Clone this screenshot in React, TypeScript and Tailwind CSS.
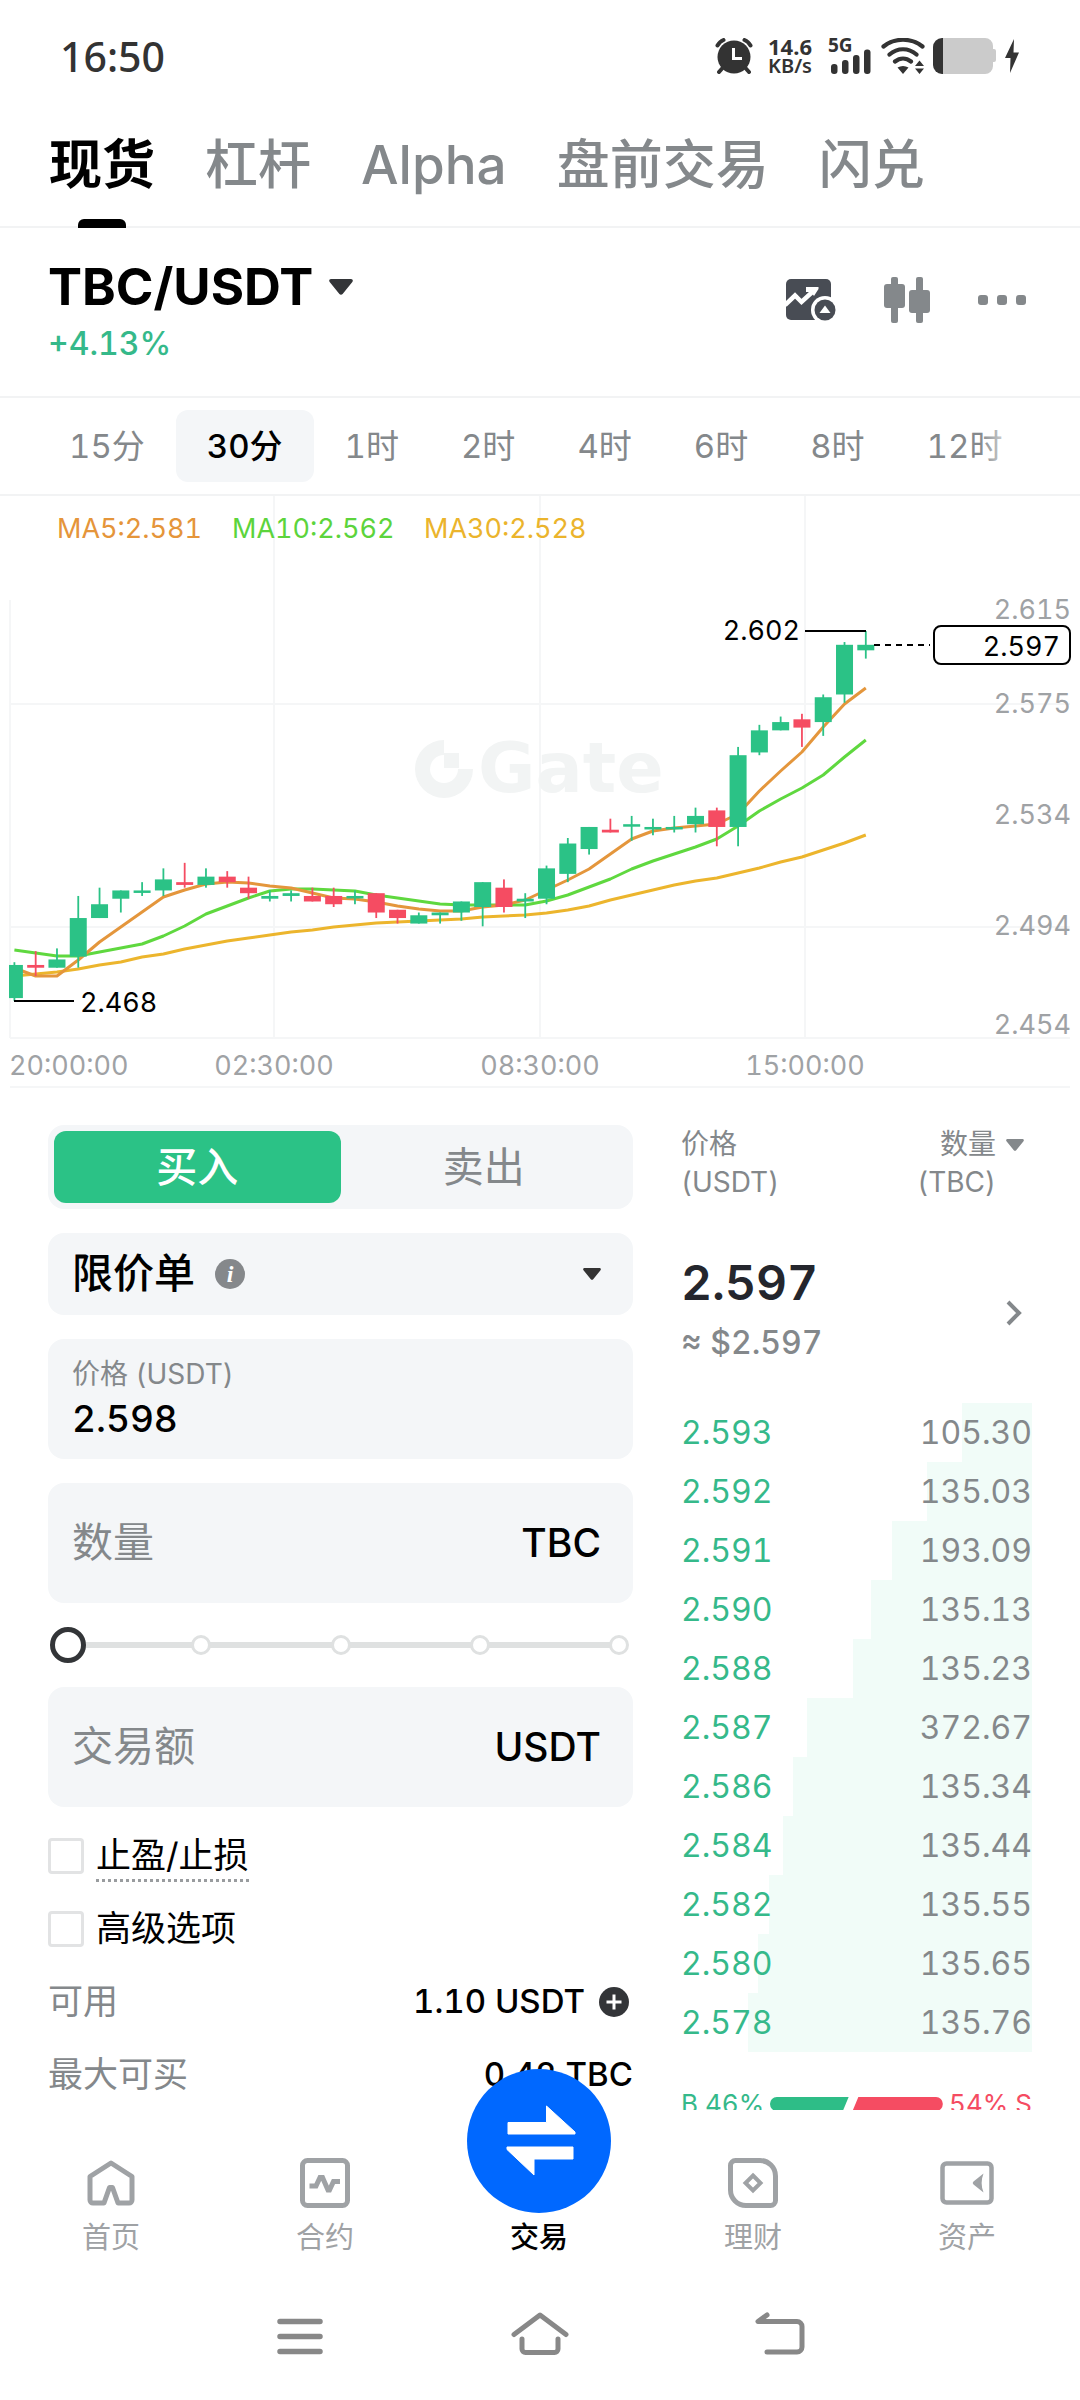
import { useState } from "react";

const tabs = ["现货", "杠杆", "Alpha", "盘前交易", "闪兑"];
const intervals = ["15分", "30分", "1时", "2时", "4时", "6时", "8时", "12时"];

// open, close, high, low (in 0.001 USDT)
const candles = [
  [2469, 2481, 2482, 2468],
  [2481, 2480, 2486, 2477],
  [2480, 2483, 2487, 2480],
  [2484, 2498, 2506, 2480],
  [2498, 2503, 2509, 2498],
  [2505, 2508, 2508, 2500],
  [2508, 2508, 2511, 2506],
  [2508, 2512, 2516, 2506],
  [2511, 2510, 2518, 2509],
  [2510, 2513, 2516, 2509],
  [2513, 2511, 2515, 2509],
  [2509, 2507, 2513, 2505],
  [2505, 2506, 2508, 2504],
  [2506, 2507, 2508, 2504],
  [2506, 2504, 2509, 2504],
  [2506, 2503, 2509, 2502],
  [2506, 2506, 2508, 2503],
  [2507, 2500, 2507, 2498],
  [2501, 2498, 2501, 2496],
  [2496, 2499, 2500, 2496],
  [2499, 2500, 2500, 2496],
  [2500, 2504, 2504, 2497],
  [2502, 2511, 2511, 2495],
  [2509, 2502, 2512, 2500],
  [2504, 2505, 2507, 2498],
  [2505, 2516, 2517, 2503],
  [2514, 2525, 2527, 2511],
  [2523, 2531, 2531, 2521],
  [2530, 2529, 2534, 2529],
  [2532, 2532, 2535, 2526],
  [2531, 2531, 2534, 2528],
  [2531, 2531, 2535, 2529],
  [2532, 2535, 2538, 2529],
  [2537, 2531, 2538, 2524],
  [2531, 2557, 2560, 2524],
  [2558, 2566, 2568, 2557],
  [2566, 2569, 2571, 2566],
  [2570, 2567, 2572, 2560],
  [2569, 2578, 2579, 2564],
  [2579, 2597, 2598, 2576],
  [2595, 2597, 2602, 2592],
];

const ma5 = [472, 480, 480, 464, 446, 431, 416, 401, 394, 388, 386, 387, 390, 392, 397, 402, 403, 406, 410, 413, 415, 415, 411, 409, 404, 394, 384, 373, 358, 343, 335, 332, 330, 328, 318, 295, 275, 256, 231, 208, 192];
const ma10 = [454, 457, 460, 460, 456, 452, 448, 440, 430, 418, 410, 402, 395, 393, 393, 394, 395, 399, 402, 405, 408, 409, 409, 409, 409, 405, 399, 391, 383, 373, 365, 358, 351, 343, 330, 315, 303, 292, 279, 261, 244];
const ma30 = [480, 478, 476, 473, 469, 466, 461, 458, 453, 449, 445, 442, 439, 436, 434, 431, 429, 427, 426, 425, 424, 423, 421, 420, 419, 417, 414, 410, 404, 399, 394, 389, 385, 382, 377, 372, 366, 361, 354, 347, 339];

const bids = [
  { price: "2.593", amount: "105.30", depth: 20 },
  { price: "2.592", amount: "135.03", depth: 30 },
  { price: "2.591", amount: "193.09", depth: 40 },
  { price: "2.590", amount: "135.13", depth: 46 },
  { price: "2.588", amount: "135.23", depth: 51 },
  { price: "2.587", amount: "372.67", depth: 64 },
  { price: "2.586", amount: "135.34", depth: 68 },
  { price: "2.584", amount: "135.44", depth: 71 },
  { price: "2.582", amount: "135.55", depth: 75 },
  { price: "2.580", amount: "135.65", depth: 78 },
  { price: "2.578", amount: "135.76", depth: 81 },
];

const candleX = (i: number) => 14.4 + i * 21.285;
const priceY = (p: number) => 135 + (2602 - p) * 2.76;
const toPoints = (line: number[]) => line.map((y, i) => `${candleX(i)},${y}`).join(" ");

function Caret({ className }: { className?: string }) {
  return (
    <svg viewBox="0 0 18 12" className={className} fill="currentColor" aria-hidden="true">
      <path d="M1.5 0h15c1.200 0 1.800 1.300 1 2.200l-7.300 9c-.6.800-1.800.800-2.400 0l-7.300-9C-.3 1.300.300 0 1.500 0z" />
    </svg>
  );
}

function StatusBar() {
  return (
    <div className="flex h-[104px] shrink-0 items-center justify-between pt-2 pl-15 pr-[61px] font-['Noto_Sans',sans-serif] text-[#333]">
      <span className="text-[41px] leading-none font-medium">16:50</span>
      <div className="flex items-center">
        <svg viewBox="0 0 38 36" className="h-9 w-[38px]">
          <circle cx="19" cy="19" r="16.500" fill="#333" />
          <path d="M2.500 7.500C4 4.800 6 3 8.500 2M35.500 7.500C34 4.800 32 3 29.500 2M8 29.500L4 34M30 29.500L34 34" stroke="#333" strokeWidth="4" fill="none" strokeLinecap="round" />
          <path d="M18.500 10v10.500H27" stroke="#fff" strokeWidth="3" fill="none" />
        </svg>
        <div className="ml-3.5 flex w-[46px] flex-col items-center text-[20px] leading-5 font-bold">
          <span className="text-[22px]">14.6</span>
          <span className="font-semibold">KB/s</span>
        </div>
        <svg viewBox="0 0 44 36" className="ml-4 h-9 w-11 overflow-visible" fill="#333">
          <text x="-1" y="14" fontSize="19" fontWeight="700">5G</text>
          <rect x="2" y="26" width="6.500" height="10" rx="3" />
          <rect x="13" y="22" width="6.500" height="14" rx="3" />
          <rect x="24" y="17" width="6.500" height="19" rx="3" />
          <rect x="35" y="11.500" width="6.500" height="24.500" rx="3" />
        </svg>
        <svg viewBox="0 0 44 36" className="ml-2 h-9 w-11" fill="none" stroke="#333" strokeWidth="4.200" strokeLinecap="round">
          <path d="M2.500 8.500C14 -.5 30 -.5 41.500 8.500M8.500 16.500C16.500 9.500 27.500 9.500 35.500 16.500M14 23.500C19 19.500 25 19.500 30 23.500" />
          <path d="M16.500 29.500C20 27.500 24 27.500 27.500 29.500L22 36zM34 28L38.500 22.500L43 28zM34 30.500L38.500 36L43 30.500z" fill="#333" stroke="none" />
        </svg>
        <svg viewBox="0 0 64 36" className="ml-2 h-9 w-16">
          <path d="M10 0H52a8 8 0 0 1 8 8V11h1a2 2 0 0 1 2 2V22a2 2 0 0 1-2 2h-1v4a8 8 0 0 1-8 8H10z" fill="#cbcbcb" />
          <path d="M10 0H9A9 9 0 0 0 0 9V27a9 9 0 0 0 9 9h1z" fill="#333" />
        </svg>
        <svg viewBox="0 0 14 34" className="ml-2 h-[34px] w-3.5" fill="#333">
          <path d="M9 0L0 19h5.500L5 34L14 13.500H8.500z" />
        </svg>
      </div>
    </div>
  );
}

function PriceChart() {
  return (
    <svg viewBox="0 0 1080 592" className="block h-auto w-full" fontFamily="Inter, sans-serif" fontSize="27">
      <g stroke="#f5f6f7" strokeWidth="2" fill="none">
        <path d="M10 104V542M274 0V542M540 0V542M805 0V542M10 208H1070M10 431H1070M10 542H1070M10 591H1070" />
      </g>

      <g fill="#f2f4f4">
        <path d="M444 244v15a14 14 0 1 0 14 14h15a29 29 0 1 1-29-29z" />
        <path d="M444 257h15v15h-15z" />
        <text x="478" y="296" fontFamily="DejaVu Sans, sans-serif" fontSize="70" fontWeight="700">Gate</text>
      </g>

      <text x="57" y="42" fill="#e5953a">MA5:2.581</text>
      <text x="232" y="42" fill="#5cd43c">MA10:2.562</text>
      <text x="424" y="42" fill="#ebb42c">MA30:2.528</text>

      <g fill="none" strokeWidth="3" strokeLinejoin="round">
        <polyline points={toPoints(ma30)} stroke="#ecb52d" />
        <polyline points={toPoints(ma10)} stroke="#5fd83f" />
        <polyline points={toPoints(ma5)} stroke="#e4963c" />
      </g>

      {candles.map(([open, close, high, low], i) => {
        const color = close >= open ? "#2bc286" : "#f54c62";
        const x = candleX(i);
        const top = priceY(Math.max(open, close));
        const height = Math.max(Math.abs(open - close) * 2.76, 2.5);
        // the first candle is clipped by the left edge of the plot
        const left = Math.max(x - 8.5, 9);
        return (
          <g key={i} fill={color}>
            <rect x={x - 0.9} y={priceY(high)} width="1.800" height={(high - low) * 2.76} />
            <rect x={left} y={top} width={x + 8.5 - left} height={height} />
          </g>
        );
      })}

      <g stroke="#000" strokeWidth="2" fill="none">
        <path d="M805 135H866M14 505H74" />
        <path d="M874 149H930" strokeDasharray="6 5" />
        <rect x="934" y="130" width="136" height="38" rx="7" fill="#fff" />
      </g>
      <g fill="#000">
        <text x="800" y="144" textAnchor="end">2.602</text>
        <text x="80" y="516">2.468</text>
        <text x="1060" y="160" textAnchor="end">2.597</text>
      </g>
      <g fill="#9fa2a5">
        <g textAnchor="end">
          <text x="1071" y="123">2.615</text>
          <text x="1071" y="217">2.575</text>
          <text x="1071" y="328">2.534</text>
          <text x="1071" y="439">2.494</text>
          <text x="1071" y="538">2.454</text>
        </g>
        <text x="9" y="579">20:00:00</text>
        <g textAnchor="middle">
          <text x="274" y="579">02:30:00</text>
          <text x="540" y="579">08:30:00</text>
          <text x="805" y="579">15:00:00</text>
        </g>
      </g>
    </svg>
  );
}

function OrderForm() {
  const [price, setPrice] = useState("2.598");
  const [percent, setPercent] = useState(0);

  return (
    <div className="min-w-0">
      <div className="flex flex-col gap-6">
        <div className="flex h-[84px] rounded-2xl bg-[#f4f6f8] p-1.5">
          <button className="flex-1 rounded-xl bg-[#2bc286] text-[41px] leading-none font-medium text-white">买入</button>
          <button className="flex-1 text-[41px] leading-none text-[#84888b]">卖出</button>
        </div>

        <div className="flex h-[82px] items-center rounded-2xl bg-[#f4f6f8] pl-6 pr-8">
          <select aria-label="订单类型" className="h-full appearance-none bg-transparent text-[41px] font-medium text-black outline-none">
            <option>限价单</option>
          </select>
          <button aria-label="说明" className="ml-5">
            <svg viewBox="0 0 30 30" className="size-[30px]">
              <circle cx="15" cy="15" r="15" fill="#85888b" />
              <text x="15" y="23" textAnchor="middle" fontFamily="Liberation Serif, serif" fontSize="24" fontStyle="italic" fontWeight="700" fill="#fff">i</text>
            </svg>
          </button>
          <Caret className="ml-auto h-3 w-[18px] text-[#333]" />
        </div>

        <div className="flex h-[120px] flex-col justify-center rounded-2xl bg-[#f4f6f8] px-6">
          <label htmlFor="price" className="text-[28px] leading-10 text-[#84888b]">价格 (USDT)</label>
          <input
            id="price"
            value={price}
            onChange={(e) => setPrice(e.target.value)}
            className="h-[50px] w-full bg-transparent text-[37px] font-medium text-black outline-none"
          />
        </div>

        <label className="flex h-[120px] items-center rounded-2xl bg-[#f4f6f8] pl-6 pr-8 text-[39px] font-medium text-black">
          <input aria-label="数量" placeholder="数量" className="w-0 min-w-0 flex-1 bg-transparent text-[41px] font-normal outline-none placeholder:text-[#84888b]" />
          TBC
        </label>

        <div className="relative flex h-9 items-center">
          <div className="absolute inset-x-4 h-1.5 bg-[#dfe1e1]" />
          <div className="absolute inset-x-1 flex justify-between">
            {[0, 25, 50, 75, 100].map((p) => (
              <span key={p} className="size-5 rounded-full border-3 border-[#dfe1e1] bg-white" />
            ))}
          </div>
          <input
            type="range"
            aria-label="仓位比例"
            value={percent}
            onChange={(e) => setPercent(Number(e.target.value))}
            className="relative mx-0.5 h-9 w-full min-w-0 appearance-none bg-transparent [&::-webkit-slider-thumb]:size-9 [&::-webkit-slider-thumb]:appearance-none [&::-webkit-slider-thumb]:rounded-full [&::-webkit-slider-thumb]:border-5 [&::-webkit-slider-thumb]:border-[#333538] [&::-webkit-slider-thumb]:bg-white"
          />
        </div>

        <label className="flex h-[120px] items-center rounded-2xl bg-[#f4f6f8] pl-6 pr-8 text-[39px] font-medium text-black">
          <input aria-label="交易额" placeholder="交易额" className="w-0 min-w-0 flex-1 bg-transparent text-[41px] font-normal outline-none placeholder:text-[#84888b]" />
          USDT
        </label>
      </div>

      <div className="mt-3 text-[35px] leading-none">
        <label className="flex h-[73px] items-center gap-3 text-black">
          <input type="checkbox" className="size-9 appearance-none rounded-sm border-3 border-[#e2e3e4] bg-white" />
          <span className="border-b-3 border-dotted border-[#999c9f] pt-2 pb-1.5">止盈/止损</span>
        </label>
        <label className="flex h-[73px] items-center gap-3 text-black">
          <input type="checkbox" className="size-9 appearance-none rounded-sm border-3 border-[#e2e3e4] bg-white" />
          <span>高级选项</span>
        </label>
        <div className="flex h-[73px] items-center justify-between">
          <span className="text-[#84888b]">可用</span>
          <span className="flex items-center gap-3.5 text-[33px] font-medium text-black">
            1.10 USDT
            <button aria-label="充值">
              <svg viewBox="0 0 30 30" className="mr-1 size-[30px]">
                <circle cx="15" cy="15" r="15" fill="#333538" />
                <path d="M15 7.500v15M7.500 15h15" stroke="#fff" strokeWidth="3" />
              </svg>
            </button>
          </span>
        </div>
        <div className="flex h-[73px] items-center justify-between">
          <span className="text-[#84888b]">最大可买</span>
          <span className="text-[33px] font-medium text-black">0.42 TBC</span>
        </div>
      </div>
    </div>
  );
}

function OrderBook() {
  return (
    <div className="min-w-0">
      <div className="flex justify-between text-[28px] leading-[38px] text-[#84888b]">
        <div>
          价格
          <br />
          (USDT)
        </div>
        <button className="flex items-start gap-2.5 pr-2 text-right">
          <span>
            数量
            <br />
            (TBC)
          </span>
          <Caret className="mt-3.5 h-3 w-[18px]" />
        </button>
      </div>

      <div className="mt-[52px] flex items-center justify-between">
        <div>
          <div className="text-[48px] leading-[60px] font-semibold text-[#24262d]">2.597</div>
          <div className="text-[32px] leading-[60px] font-medium text-[#84888b]">≈ $2.597</div>
        </div>
        <button aria-label="更多" className="pr-2.5">
          <svg viewBox="0 0 16 26" className="h-[26px] w-4" fill="none" stroke="#84888b" strokeWidth="4">
            <path d="M2 2l11 11L2 24" />
          </svg>
        </button>
      </div>

      <table className="mt-[30px] w-full border-collapse text-[32px] leading-none">
        <tbody>
          {bids.map((b) => (
            <tr
              key={b.price}
              className="h-[59px]"
              style={{ backgroundImage: `linear-gradient(to left, #f1fcf8 ${b.depth}%, transparent ${b.depth}%)` }}
            >
              <td className="p-0 text-[#35b98a]">{b.price}</td>
              <td className="p-0 text-right text-[#84888b]">{b.amount}</td>
            </tr>
          ))}
        </tbody>
      </table>

      <div className="mt-8 flex h-10 items-center gap-1.5 text-[26px] leading-none whitespace-nowrap">
        <span className="text-[#35b98a]">B 46%</span>
        <svg viewBox="0 0 178 14" preserveAspectRatio="none" className="h-3.5 min-w-0 flex-1">
          <path d="M7 0H81L75 14H7A7 7 0 0 1 7 0z" fill="#2ebd87" />
          <path d="M91 0H171A7 7 0 0 1 171 14H85z" fill="#f54c62" />
        </svg>
        <span className="text-[#f54c62]">54% S</span>
      </div>
    </div>
  );
}

function BottomNav() {
  const item = "flex flex-1 flex-col items-center text-[29px] leading-10 text-[#9fa2a5]";
  const icon = "mt-12 mb-2.5 h-[50px]";
  return (
    <nav className="flex h-[174px] pr-1.5 pl-1">
      <a href="#home" className={item}>
        <svg viewBox="0 0 48 50" className={`${icon} w-12`} fill="none" stroke="currentColor" strokeWidth="5" strokeLinejoin="round">
          <path d="M24 5L3 18.500V42a3 3 0 0 0 3 3H17L22.500 29.500h3L31 45H42a3 3 0 0 0 3-3V18.500z" />
        </svg>
        首页
      </a>
      <a href="#futures" className={item}>
        <svg viewBox="0 0 50 50" className={`${icon} w-[50px]`} fill="none" stroke="currentColor" strokeWidth="5">
          <rect x="2.500" y="2.500" width="45" height="45" rx="5" />
          <path d="M9.500 28H16L20 19.500H22.500L28 32H29.500L33.500 23.500H40" />
        </svg>
        合约
      </a>
      <a href="#trade" className="relative flex flex-1 flex-col items-center pt-27 text-[29px] leading-10 font-medium text-black">
        <svg viewBox="0 0 144 144" className="absolute -top-[41px] size-36">
          <circle cx="72" cy="72" r="72" fill="#0068ff" />
          <g fill="#fff" stroke="#fff" strokeWidth="1" strokeLinejoin="round">
            <path d="M41 53.500H79.500V37L108 63V65H41z" />
            <path d="M106 78H40V80.500L67 106V90H106z" />
          </g>
        </svg>
        交易
      </a>
      <a href="#earn" className={item}>
        <svg viewBox="0 0 50 50" className={`${icon} w-[50px]`} fill="none" stroke="currentColor" strokeWidth="5">
          <path d="M7.500 2.500H32A15.500 15.500 0 0 1 47.500 18V42.500a5 5 0 0 1-5 5H18A15.500 15.500 0 0 1 2.500 32V7.500a5 5 0 0 1 5-5z" />
          <path d="M25 17.500L32.500 25L25 32.500L17.500 25z" strokeWidth="4" />
        </svg>
        理财
      </a>
      <a href="#assets" className={item}>
        <svg viewBox="0 0 54 50" className={`${icon} w-[54px]`} fill="none" stroke="currentColor" strokeWidth="4.500">
          <rect x="2.500" y="5.500" width="49" height="39" rx="4" />
          <path d="M43.500 15.500L33.500 23.500a2 2 0 0 0 0 3L43.500 34.500C41 28 41 22 43.500 15.500z" fill="currentColor" stroke="none" />
        </svg>
        资产
      </a>
    </nav>
  );
}

export default function App() {
  const [tab, setTab] = useState("现货");
  const [interval, setIntervalName] = useState("30分");

  return (
    <div className="flex h-screen flex-col bg-white font-['Inter','Noto_Sans_CJK_SC',sans-serif] tabular-nums">
      <StatusBar />

      <div className="flex h-[124px] shrink-0 gap-[50px] border-b-2 border-[#f2f3f4] px-[49px] text-[53px] leading-[114px]">
        {tabs.map((t) => (
          <button
            key={t}
            onClick={() => setTab(t)}
            className={t === tab ? "relative font-bold whitespace-nowrap text-black" : "font-medium whitespace-nowrap text-[#84888b]"}
          >
            {t}
            {t === tab && <span className="absolute -bottom-0.5 left-1/2 h-[9px] w-12 -translate-x-1/2 rounded-t-md bg-black" />}
          </button>
        ))}
      </div>

      <main className="min-h-0 flex-1 overflow-y-auto [scrollbar-width:none]">
        <header className="flex h-[170px] items-center justify-between border-b-2 border-[#f2f3f4] pl-12 pr-[54px]">
          <div className="mt-1">
            <button className="flex items-center gap-4 text-[51px] leading-[60px] font-bold text-black">
              TBC/USDT
              <Caret className="h-4 w-6 text-[#333538]" />
            </button>
            <div className="text-[32px] leading-[54px] font-medium text-[#35b98a]">+4.13%</div>
          </div>
          <div className="-mt-6 flex items-center gap-12">
            <button aria-label="图表">
              <svg viewBox="0 0 50 42" className="h-[42px] w-[50px]">
                <rect x="0" y="0" width="45" height="41" rx="5" fill="#484c54" />
                <path d="M-1 26L9 16.500L15.500 23L28.500 11" fill="none" stroke="#fff" strokeWidth="4.500" />
                <path d="M20 8h12.500v2L28 17l-3-4h-5z" fill="#fff" />
                <circle cx="39" cy="31" r="14" fill="#fff" />
                <circle cx="39" cy="31" r="10.500" fill="#484c54" />
                <path d="M39 26.500L44.500 34H33.500z" fill="#fff" />
              </svg>
            </button>
            <button aria-label="K线">
              <svg viewBox="0 0 46 46" className="size-[46px]" fill="#84888b">
                <rect x="7" y="0" width="7" height="46" rx="2" />
                <rect x="0" y="7" width="21" height="24" rx="3" />
                <rect x="32" y="0" width="7" height="46" rx="2" />
                <rect x="25" y="13" width="21" height="23" rx="3" />
              </svg>
            </button>
            <button aria-label="更多" className="flex gap-[9px]">
              <span className="size-2.5 rounded-[3px] bg-[#84888b]" />
              <span className="size-2.5 rounded-[3px] bg-[#84888b]" />
              <span className="size-2.5 rounded-[3px] bg-[#84888b]" />
            </button>
          </div>
        </header>

        <div className="relative flex h-[98px] items-center overflow-hidden border-b-2 border-[#f2f3f4] pl-[38px] text-[33px] leading-none">
          {intervals.map((name) => (
            <button
              key={name}
              onClick={() => setIntervalName(name)}
              className={
                name === interval
                  ? "h-[72px] shrink-0 rounded-xl bg-[#f4f6f8] px-[31px] font-medium text-black"
                  : "h-[72px] shrink-0 px-[31px] text-[#84888b]"
              }
            >
              {name}
            </button>
          ))}
          <div className="absolute inset-y-0 right-0 w-[100px] bg-linear-to-r from-transparent to-white to-40%" />
        </div>

        <PriceChart />

        <div className="grid grid-cols-[minmax(0,5fr)_minmax(0,3fr)] gap-12 px-12 pt-[37px]">
          <OrderForm />
          <OrderBook />
        </div>
      </main>

      <footer className="relative shrink-0 bg-white">
        <BottomNav />
        <div className="flex h-[116px] items-start justify-center gap-[182px] pt-7">
          <button aria-label="最近任务">
            <svg viewBox="0 0 58 44" className="h-11 w-[58px]" stroke="#888" strokeWidth="5.500" strokeLinecap="round">
              <path d="M9 9.500H49M9 24.500H49M9 39.500H49" />
            </svg>
          </button>
          <button aria-label="主屏幕">
            <svg viewBox="0 0 58 44" className="h-11 w-[58px]" fill="none" stroke="#888" strokeWidth="5" strokeLinecap="round" strokeLinejoin="round">
              <path d="M3 22.500L29 3L55 22.500M11 27V37a3.500 3.500 0 0 0 3.500 3.500H43.500A3.500 3.500 0 0 0 47 37V27" />
            </svg>
          </button>
          <button aria-label="返回">
            <svg viewBox="0 0 58 44" className="h-11 w-[58px]" fill="none" stroke="#888" strokeWidth="5" strokeLinecap="round" strokeLinejoin="round">
              <path d="M16 3L7 9.500H46a5 5 0 0 1 5 5V35a5 5 0 0 1-5 5H16" />
            </svg>
          </button>
        </div>
      </footer>
    </div>
  );
}
